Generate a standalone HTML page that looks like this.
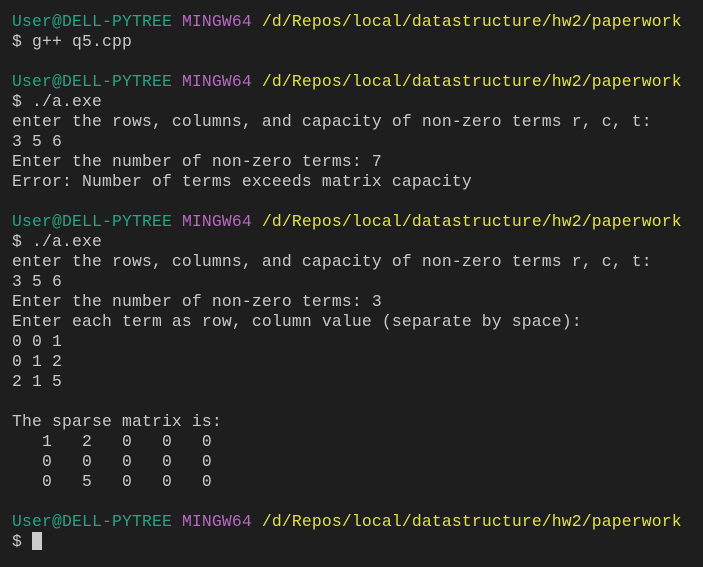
<!DOCTYPE html><html><head><style>
html,body{margin:0;background:#1e1e1e;width:703px;height:567px;overflow:hidden}
pre{margin:0;position:absolute;left:12px;top:12px;font-family:"Liberation Mono",monospace;font-size:16.4px;letter-spacing:0.16px;line-height:20px;color:#c8c8c8}
.g{color:#27a483}.m{color:#b968c2}.y{color:#e0e04a}
.c{display:inline-block;width:10px;height:18px;background:#cccccc;vertical-align:-4px}
</style></head><body><pre><span class="g">User@DELL-PYTREE</span> <span class="m">MINGW64</span> <span class="y">/d/Repos/local/datastructure/hw2/paperwork</span>
$ g++ q5.cpp

<span class="g">User@DELL-PYTREE</span> <span class="m">MINGW64</span> <span class="y">/d/Repos/local/datastructure/hw2/paperwork</span>
$ ./a.exe
enter the rows, columns, and capacity of non-zero terms r, c, t:
3 5 6
Enter the number of non-zero terms: 7
Error: Number of terms exceeds matrix capacity

<span class="g">User@DELL-PYTREE</span> <span class="m">MINGW64</span> <span class="y">/d/Repos/local/datastructure/hw2/paperwork</span>
$ ./a.exe
enter the rows, columns, and capacity of non-zero terms r, c, t:
3 5 6
Enter the number of non-zero terms: 3
Enter each term as row, column value (separate by space):
0 0 1
0 1 2
2 1 5

The sparse matrix is:
   1   2   0   0   0
   0   0   0   0   0
   0   5   0   0   0

<span class="g">User@DELL-PYTREE</span> <span class="m">MINGW64</span> <span class="y">/d/Repos/local/datastructure/hw2/paperwork</span>
$ <span class="c"></span></pre></body></html>
